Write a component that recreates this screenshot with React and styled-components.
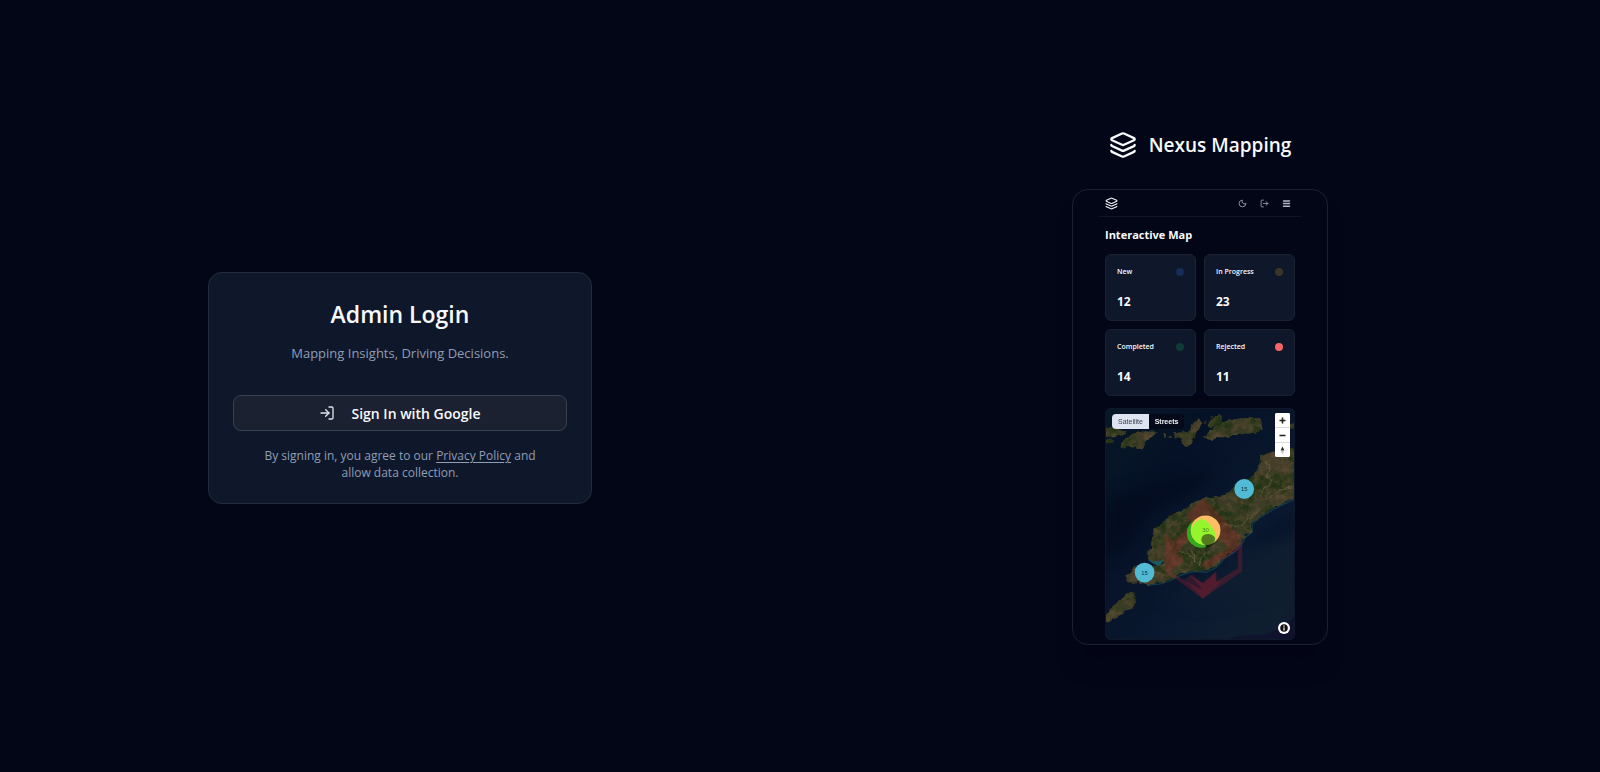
import React from "react";
import styled, { createGlobalStyle } from "styled-components";
import { Layers, LogIn, LogOut, Menu, Moon } from "lucide-react";

const GlobalStyle = createGlobalStyle`
  *, *::before, *::after { box-sizing: border-box; }
  body {
    margin: 0;
    background: #020617;
    color: #f8fafc;
    font-family: "Open Sans", "Noto Sans", sans-serif;
  }
`;

const Page = styled.main`
  display: grid;
  grid-template-columns: 1fr 1fr;
  align-items: center;
  justify-items: center;
  min-height: 100vh;
  padding-top: 4px;
  background: #020617;
`;

const LoginCard = styled.section`
  width: 384px;
  max-width: 100%;
  padding: 24px 24px 22px;
  border: 1px solid #232c3d;
  border-radius: 14px;
  background: #0f172a;
  text-align: center;
`;

const LoginTitle = styled.h1`
  margin: 0 0 12px;
  font-size: 23px;
  line-height: 34px;
  font-weight: 600;
`;

const Tagline = styled.p`
  margin: 0 0 32px;
  color: #8f9db5;
  font-size: 13px;
  line-height: 20px;
`;

const SignInButton = styled.button`
  display: flex;
  align-items: center;
  justify-content: center;
  gap: 16px;
  width: 100%;
  height: 36px;
  border: 1px solid #374151;
  border-radius: 8px;
  background: #1c2132;
  color: #f8fafc;
  font: inherit;
  font-size: 14px;
  font-weight: 600;
  cursor: pointer;
`;

const Terms = styled.p`
  margin: 16px 0 0;
  padding: 0 24px;
  color: #8f9db5;
  font-size: 12px;
  line-height: 17px;
`;

const TermsLink = styled.a`
  color: inherit;
  text-decoration: underline;
  text-underline-offset: 2px;
`;

const Showcase = styled.section`
  display: flex;
  flex-direction: column;
  align-items: center;
  gap: 30px;
`;

const Brand = styled.div`
  display: flex;
  align-items: center;
  gap: 12px;
  font-size: 19px;
  line-height: 28px;
  font-weight: 600;
`;

const Phone = styled.div`
  width: 256px;
  padding: 0 26px 4px;
  border: 1px solid #1c2030;
  border-radius: 16px;
  background: #020617;
  box-shadow: 0 24px 24px -12px rgba(4, 2, 18, 0.5);
`;

const PhoneBar = styled.header`
  display: flex;
  align-items: center;
  gap: 13px;
  height: 27px;
  padding: 0 10px 0 6px;
  border-bottom: 1px solid #0f1424;
  color: #b4b8c4;
`;

const BarLogo = styled.span`
  display: flex;
  margin-right: auto;
  color: #f1f3f8;
`;

const PhoneBody = styled.div`
  padding: 0 6px;
`;

const PhoneTitle = styled.h2`
  margin: 10px 0 11px;
  font-size: 11px;
  line-height: 16px;
  font-weight: 700;
`;

const StatGrid = styled.div`
  display: grid;
  grid-template-columns: 1fr 1fr;
  gap: 8px;
`;

const StatCard = styled.article`
  display: flex;
  flex-direction: column;
  justify-content: space-between;
  height: 67px;
  padding: 12px 11px 10px;
  border: 1px solid #1a2234;
  border-radius: 6px;
  background: #0f172a;
`;

const StatHead = styled.div`
  display: flex;
  align-items: center;
  justify-content: space-between;
  font-size: 7px;
  line-height: 10px;
  font-weight: 600;
`;

const Dot = styled.span`
  width: 8px;
  height: 8px;
  border-radius: 50%;
  background: ${(p) => p.$color};
`;

const StatValue = styled.div`
  font-size: 12px;
  line-height: 16px;
  font-weight: 700;
`;

const MapPanel = styled.div`
  position: relative;
  height: 232px;
  margin-top: 12px;
  overflow: hidden;
  border: 1px solid #101729;
  border-radius: 5px;
  background: #07142a;
`;

const MapArt = styled.svg`
  display: block;
  width: 100%;
  height: 100%;
`;

const StyleSwitch = styled.div`
  position: absolute;
  top: 5px;
  left: 6px;
  display: flex;
  overflow: hidden;
  border-radius: 4px;
  background: #050919;
`;

const StyleOption = styled.button`
  width: ${(p) => p.$width};
  height: 15px;
  padding: 0;
  border: 0;
  background: ${(p) => (p.$active ? "#dfe5f0" : "transparent")};
  color: ${(p) => (p.$active ? "#394255" : "#f1f3f8")};
  font-family: "Liberation Sans", sans-serif;
  font-size: 7px;
  font-weight: ${(p) => (p.$active ? 400 : 700)};
`;

const ZoomControls = styled.div`
  position: absolute;
  top: 4px;
  right: 4px;
  display: flex;
  flex-direction: column;
  width: 15px;
  overflow: hidden;
  border-radius: 2px;
  background: #ffffff;
`;

const ZoomButton = styled.button`
  display: flex;
  align-items: center;
  justify-content: center;
  height: 15px;
  padding: 0;
  border: 0;
  border-bottom: 1px solid #d9dbe0;
  background: #ffffff;

  &:last-child {
    height: 14px;
    border-bottom: 0;
  }
`;

const InfoButton = styled.button`
  position: absolute;
  right: 4px;
  bottom: 5px;
  display: flex;
  align-items: center;
  justify-content: center;
  width: 12px;
  height: 12px;
  padding: 0;
  border: 0;
  border-radius: 50%;
  background: #ffffff;
`;

const stats = [
  { label: "New", value: 12, color: "#172b5c" },
  { label: "In Progress", value: 23, color: "#3d3423" },
  { label: "Completed", value: 14, color: "#0f3b36" },
  { label: "Rejected", value: 11, color: "#f66466" },
];

const mainland =
  "M710 142L690 142L680 148L655 155L625 157L604 167L600 190L590 212L570 235L545 240L525 255L515 270L490 285L460 290L430 295L400 306L380 325L345 340L320 355L300 375L280 385L275 410L271 440L262 460L260 478L280 485L302 480L312 490L290 500L250 494L222 500L210 515L198 530L197 545L215 550L235 548L262 555L300 550L330 540L365 522L400 512L440 515L470 500L490 475L520 455L545 430L555 410L575 395L575 370L600 350L640 325L680 305L710 293Z";

const islets = [
  "M432 108L450 90L470 75L500 60L540 52L604 52L609 85L590 95L550 100L510 107L480 110L452 118Z",
  "M446 62L455 50L490 45L482 66L465 76L448 80Z",
  "M338 98L365 94L385 90L400 66L415 55L428 65L415 90L400 108L396 128L380 140L370 130L362 114L345 112Z",
  "M176 137L195 115L215 99L240 92L292 92L275 108L258 118L255 128L245 147L225 138L205 136L190 142Z",
  "M130 80L165 80L197 92L190 104L130 108Z",
  "M130 114L163 118L150 127L130 127Z",
  "M130 650L150 625L175 605L190 590L210 573L224 584L225 610L215 628L190 635L180 650L145 668L130 672Z",
  "M692 72L710 65L710 84L696 82Z",
  "M310 100L317 100L317 110L310 110Z",
  "M325 103L331 103L331 109L325 109Z",
  "M433 60L439 57L439 70L433 72Z",
];

function SatelliteMap() {
  return (
    <MapArt viewBox="135 24 570 696" preserveAspectRatio="none" role="img" aria-label="Satellite map">
      <defs>
        <linearGradient id="sea" x1="0" y1="0" x2="1" y2="1">
          <stop offset="0" stopColor="#071827" />
          <stop offset="0.3" stopColor="#051126" />
          <stop offset="0.65" stopColor="#0a1930" />
          <stop offset="0.9" stopColor="#101f2f" />
          <stop offset="1" stopColor="#0f1630" />
        </linearGradient>
        <linearGradient id="soil" x1="0" y1="1" x2="1" y2="0">
          <stop offset="0" stopColor="#4a412c" />
          <stop offset="0.5" stopColor="#363a22" />
          <stop offset="1" stopColor="#4a3f2c" />
        </linearGradient>
        <filter id="terrain" x="0" y="0" width="1" height="1" colorInterpolationFilters="sRGB">
          <feTurbulence type="fractalNoise" baseFrequency="0.06" numOctaves="3" seed="8" />
          <feColorMatrix values="0 0 0 0 0.4  0 0 0 0 0.33  0 0 0 0 0.22  2.4 0 0 0 -1" />
          <feComposite in2="SourceGraphic" operator="in" />
        </filter>
        <filter id="forest" x="0" y="0" width="1" height="1" colorInterpolationFilters="sRGB">
          <feTurbulence type="fractalNoise" baseFrequency="0.018" numOctaves="4" seed="23" />
          <feColorMatrix values="0 0 0 0 0.13  0 0 0 0 0.2  0 0 0 0 0.08  4 0 0 0 -1.6" />
          <feComposite in2="SourceGraphic" operator="in" />
        </filter>
        <filter id="coast" x="-0.1" y="-0.1" width="1.2" height="1.2" colorInterpolationFilters="sRGB">
          <feTurbulence type="fractalNoise" baseFrequency="0.06" numOctaves="2" seed="4" />
          <feDisplacementMap
            in="SourceGraphic"
            scale="14"
            xChannelSelector="R"
            yChannelSelector="G"
          />
        </filter>
        <filter
          id="soft"
          x="-0.3"
          y="-0.3"
          width="1.6"
          height="1.6"
          colorInterpolationFilters="sRGB"
        >
          <feGaussianBlur stdDeviation="22" />
        </filter>
        <g id="land">
          <path d={mainland} />
          {islets.map((d) => (
            <path key={d} d={d} />
          ))}
        </g>
      </defs>
      <rect x="135" y="24" width="570" height="696" fill="url(#sea)" />
      <g filter="url(#soft)">
        <path d="M135 300L300 250L480 200L420 260L260 330L200 440L135 470Z" fill="#030a1d" opacity="0.7" />
        <path d="M705 400L560 460L440 540L300 590L420 620L705 560Z" fill="#121f30" opacity="0.45" />
        <path d="M560 440L705 330L705 400Z" fill="#05122b" />
      </g>
      <path d="M500 720Q560 704 610 708Q680 690 705 655V720Z" fill="#110e2c" opacity="0.7" />
      <path d="M262 482L310 482L296 502Z" fill="#1c5960" />
      <path
        d="M262 557L300 553L330 543L365 525L400 515L440 518L470 503L492 478L522 458L547 433L558 412L578 397L578 372L602 352L642 328L705 297"
        fill="none"
        stroke="#15505a"
        strokeWidth="4"
        opacity="0.65"
      />
      <g filter="url(#coast)">
        <use href="#land" fill="url(#soil)" />
        <use href="#land" filter="url(#forest)" opacity="0.9" />
        <use href="#land" filter="url(#terrain)" opacity="0.6" />
        <path
          d="M355 455L385 462L405 485L420 500M415 500L425 470L450 455M405 485L395 450M620 180L632 200L622 225L640 245L615 262L600 290M550 375L520 380L495 370M550 375L565 355L600 335M635 290L660 270L700 262"
          fill="none"
          stroke="#7b6c4c"
          strokeWidth="3"
          opacity="0.6"
        />
      </g>
      <g fill="#b3202c">
        <path
          d="M428 292L545 412L510 450L430 365L352 458L372 484L325 516L428 572L400 540L385 525L428 550L470 515V545L535 507V452L440 505L425 492L548 420V515L428 598L315 515V400L340 425L395 372L380 345Z"
          opacity="0.27"
        />
        <path d="M372 540L395 525L430 552L468 518V545L486 545L430 598Z" opacity="0.2" />
      </g>
      <circle cx="424" cy="400" r="44" fill="#36a81e" />
      <circle cx="437" cy="391" r="45" fill="#fdbf62" />
      <path d="M424 356Q450 362 466 400Q468 420 462 428Q450 436 437 436Q400 432 393 400Q392 370 424 356Z" fill="#95f52c" />
      <path d="M424 418Q426 402 446 402Q462 404 466 416L464 426Q452 438 436 436Q424 430 424 418Z" fill="#527a1e" />
      <path d="M436 436Q452 436 464 428Q458 440 440 444Z" fill="#16220d" />
      <g fontFamily="Liberation Sans, sans-serif" fontSize="18" textAnchor="middle">
        <text x="437" y="397" fill="#4a8a20">30</text>
        <circle cx="554" cy="266" r="30" fill="#51bbd6" />
        <text x="554" y="272" fill="#10242c">15</text>
        <circle cx="252" cy="519" r="30" fill="#51bbd6" />
        <text x="252" y="525" fill="#10242c">15</text>
      </g>
    </MapArt>
  );
}

export default function App() {
  return (
    <>
      <GlobalStyle />
      <Page>
        <LoginCard>
          <LoginTitle>Admin Login</LoginTitle>
          <Tagline>Mapping Insights, Driving Decisions.</Tagline>
          <SignInButton type="button">
            <LogIn size={16} color="#dfe3ea" />
            Sign In with Google
          </SignInButton>
          <Terms>
            By signing in, you agree to our <TermsLink href="#privacy">Privacy Policy</TermsLink> and allow data
            collection.
          </Terms>
        </LoginCard>

        <Showcase>
          <Brand>
            <Layers size={28} />
            Nexus Mapping
          </Brand>
          <Phone>
            <PhoneBar>
              <BarLogo>
                <Layers size={13} />
              </BarLogo>
              <Moon size={9} />
              <LogOut size={9} />
              <Menu size={9} strokeWidth={4} />
            </PhoneBar>
            <PhoneBody>
              <PhoneTitle>Interactive Map</PhoneTitle>
              <StatGrid>
                {stats.map((s) => (
                  <StatCard key={s.label}>
                    <StatHead>
                      {s.label}
                      <Dot $color={s.color} />
                    </StatHead>
                    <StatValue>{s.value}</StatValue>
                  </StatCard>
                ))}
              </StatGrid>
              <MapPanel>
                <SatelliteMap />
                <StyleSwitch>
                  <StyleOption type="button" $active $width="37px">
                    Satellite
                  </StyleOption>
                  <StyleOption type="button" $width="35px">
                    Streets
                  </StyleOption>
                </StyleSwitch>
                <ZoomControls>
                  <ZoomButton type="button" aria-label="Zoom in">
                    <svg width="7" height="7" viewBox="0 0 7 7">
                      <path d="M3.5 0.5V6.5M0.5 3.5H6.5" stroke="#222" strokeWidth="1.6" />
                    </svg>
                  </ZoomButton>
                  <ZoomButton type="button" aria-label="Zoom out">
                    <svg width="7" height="7" viewBox="0 0 7 7">
                      <path d="M0.5 3.5H6.5" stroke="#222" strokeWidth="1.6" />
                    </svg>
                  </ZoomButton>
                  <ZoomButton type="button" aria-label="Reset bearing">
                    <svg width="7" height="9" viewBox="0 0 7 9">
                      <path d="M3.5 0.5L5.4 4.4H1.6Z" fill="#222" />
                      <path d="M3.5 8.5L5.4 4.8H1.6Z" fill="#c4c4c4" />
                    </svg>
                  </ZoomButton>
                </ZoomControls>
                <InfoButton type="button" aria-label="Map information">
                  <svg width="8" height="8" viewBox="0 0 8 8">
                    <circle cx="4" cy="4" r="3.8" fill="#111" />
                    <path d="M4 1.5V2.7M4 3.4V6.4" stroke="#fff" strokeWidth="1.2" />
                  </svg>
                </InfoButton>
              </MapPanel>
            </PhoneBody>
          </Phone>
        </Showcase>
      </Page>
    </>
  );
}
